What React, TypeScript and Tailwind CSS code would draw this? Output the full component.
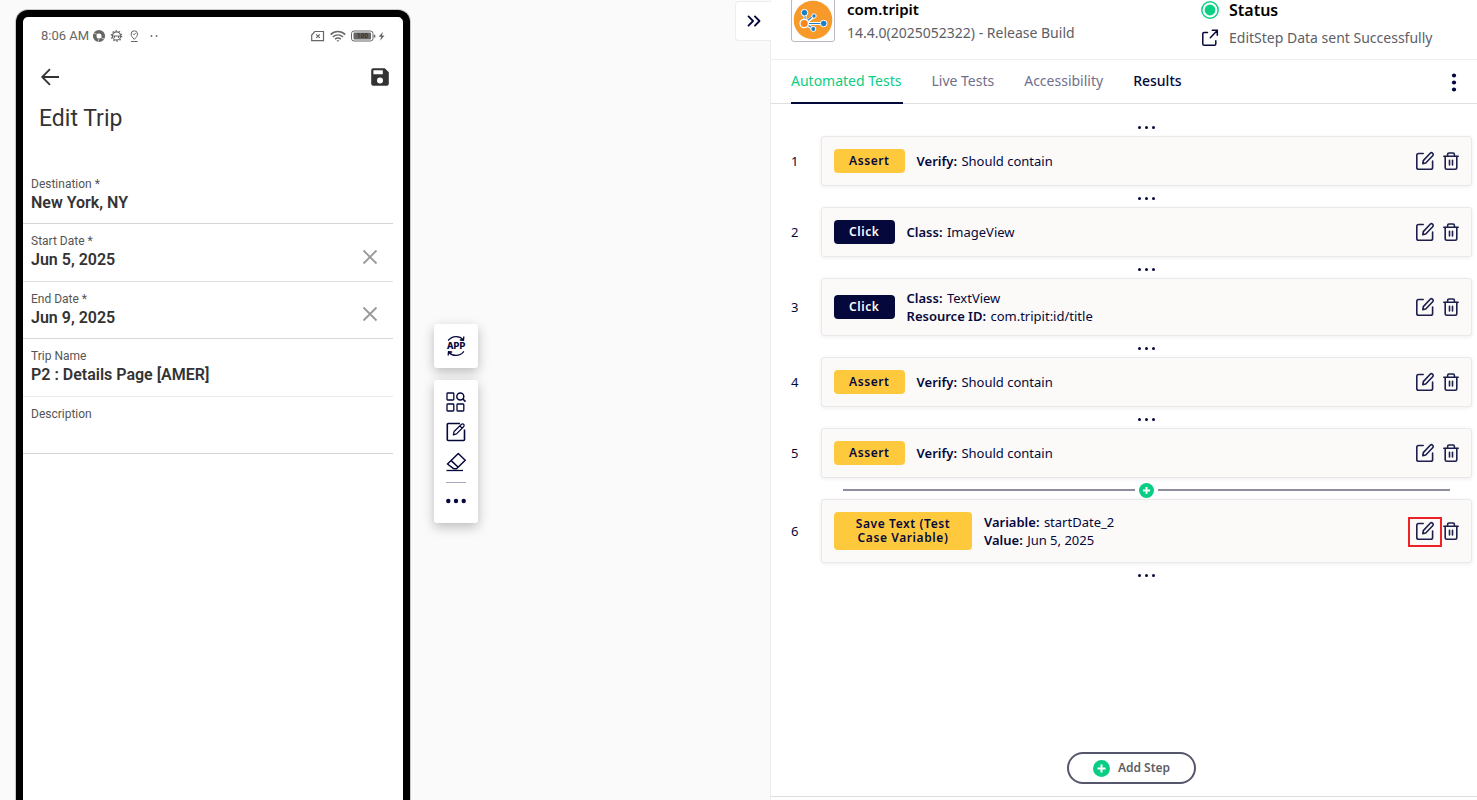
import { ChevronsRight } from "lucide-react";

interface StepDetail {
  label: string;
  value: string;
}

interface Step {
  id: number;
  action: string;
  kind: "assert" | "click" | "save";
  details: StepDetail[];
  highlighted?: boolean;
}

const steps: Step[] = [
  { id: 1, action: "Assert", kind: "assert", details: [{ label: "Verify", value: "Should contain" }] },
  { id: 2, action: "Click", kind: "click", details: [{ label: "Class", value: "ImageView" }] },
  {
    id: 3,
    action: "Click",
    kind: "click",
    details: [
      { label: "Class", value: "TextView" },
      { label: "Resource ID", value: "com.tripit:id/title" },
    ],
  },
  { id: 4, action: "Assert", kind: "assert", details: [{ label: "Verify", value: "Should contain" }] },
  { id: 5, action: "Assert", kind: "assert", details: [{ label: "Verify", value: "Should contain" }] },
  {
    id: 6,
    action: "Save Text (Test Case Variable)",
    kind: "save",
    details: [
      { label: "Variable", value: "startDate_2" },
      { label: "Value", value: "Jun 5, 2025" },
    ],
    highlighted: true,
  },
];

const badgeStyles = {
  assert: "bg-[#ffc93e] text-[#05083b]",
  click: "bg-[#05083b] text-white",
  save: "w-[138px] bg-[#ffc93e] text-[#05083b]",
};

const tripFields = [
  { id: "destination", label: "Destination *", value: "New York, NY", clearable: false, line: "border-[#d4d4d4]" },
  { id: "start-date", label: "Start Date *", value: "Jun 5, 2025", clearable: true, line: "border-[#e2e2e2]" },
  { id: "end-date", label: "End Date *", value: "Jun 9, 2025", clearable: true, line: "border-[#d6d6d6]" },
  { id: "trip-name", label: "Trip Name", value: "P2 : Details Page [AMER]", clearable: false, line: "border-[#ebebeb]" },
  { id: "description", label: "Description", value: "", clearable: false, line: "border-[#d4d4d4]" },
];

const tabs = [
  { name: "Automated Tests", style: "border-[#05083b] text-[#0bce82]" },
  { name: "Live Tests", style: "border-transparent text-[#706f8c]" },
  { name: "Accessibility", style: "border-transparent text-[#706f8c]" },
  { name: "Results", style: "border-transparent font-medium text-[#05083b]" },
];

function EditIcon() {
  return (
    <svg viewBox="0 0 20 20" className="size-5" fill="none" stroke="#1d1f4d" strokeWidth="1.6" strokeLinecap="round" strokeLinejoin="round">
      <path d="M8.2 2.5H3.6c-1 0-1.8.8-1.8 1.8v12.2c0 1 .8 1.8 1.8 1.8h12.2c1 0 1.8-.8 1.8-1.8V10" />
      <path d="M8.3 9.6l6.9-7.3a1.7 1.7 0 0 1 2.5 2.4l-7 7.3-2.9.6z" />
    </svg>
  );
}

function TrashIcon() {
  return (
    <svg viewBox="0 0 20 20" className="size-5" fill="none" stroke="#1d1f4d" strokeWidth="1.6" strokeLinecap="round" strokeLinejoin="round">
      <path d="M2.8 5.3h14.4M6.6 5V3.4c0-.8.6-1.4 1.4-1.4h4c.8 0 1.4.6 1.4 1.4V5" />
      <path d="M4.2 5.5v11c0 1 .7 1.7 1.7 1.7h8.2c1 0 1.7-.7 1.7-1.7v-11M8.5 9.3v4.6M11.5 9.3v4.6" />
    </svg>
  );
}

function PlusCircle({ className }: { className: string }) {
  return (
    <svg viewBox="0 0 16 16" className={className}>
      <circle cx="8" cy="8" r="8" fill="#08ce84" />
      <path d="M8 4.2v7.6M4.2 8h7.6" stroke="#fff" strokeWidth="1.9" />
    </svg>
  );
}

function StepGap({ open }: { open?: boolean }) {
  if (open) {
    return (
      <div className="flex h-[21px] items-center pt-[3px] pr-[22px] pl-[52px]">
        <span className="h-[2px] flex-1 bg-[#8f8d9f]" />
        <button aria-label="Insert step" className="mx-1">
          <PlusCircle className="size-[15px]" />
        </button>
        <span className="h-[2px] flex-1 bg-[#8f8d9f]" />
      </div>
    );
  }
  return (
    <div className="flex h-[21px] items-center justify-center pt-[3px] pl-[30px]">
      <button aria-label="Show insert options" className="flex gap-1">
        <span className="size-[3px] rounded-full bg-[#05083b]" />
        <span className="size-[3px] rounded-full bg-[#05083b]" />
        <span className="size-[3px] rounded-full bg-[#05083b]" />
      </button>
    </div>
  );
}

function StepRow({ step }: { step: Step }) {
  return (
    <div className="flex items-center text-[13px] leading-[18px] text-[#05083b]">
      <span className="w-[30px]">{step.id}</span>
      <div className="flex flex-1 items-center rounded-[3px] border border-[#e9e9eb] bg-[#fbfaf9] py-[10px] pr-[10px] pl-3 shadow-[0_1px_4px_rgba(0,0,0,0.07)]">
        <span
          className={`my-[2px] mr-3 rounded-[4px] px-[15px] py-[5px] text-center text-[12px] leading-[14px] font-semibold tracking-wider ${badgeStyles[step.kind]}`}
        >
          {step.action}
        </span>
        <div className="flex-1">
          {step.details.map((detail) => (
            <p key={detail.label}>
              <b className="mr-px font-semibold">{detail.label}:</b> {detail.value}
            </p>
          ))}
        </div>
        <div className="flex gap-[6px]">
          <button aria-label={`Edit step ${step.id}`} className="relative">
            <EditIcon />
            {step.highlighted && <span className="absolute -top-1 -right-[7px] -bottom-[6px] -left-[7px] border-2 border-[#ee2226]" />}
          </button>
          <button aria-label={`Delete step ${step.id}`}>
            <TrashIcon />
          </button>
        </div>
      </div>
    </div>
  );
}

function StatusBar() {
  return (
    <div className="flex h-[37px] items-center pr-[17px] pl-[18px] text-[13px] text-[#666]">
      <span>8:06 AM</span>
      <svg viewBox="0 0 66 14" className="ml-[3px] h-[14px] w-[66px]" fill="none" stroke="#666">
        <circle cx="7" cy="7" r="4.3" strokeWidth="3.6" />
        <path d="M5.5 4.6l4 2.4-4 2.6z" fill="#fff" stroke="none" />
        <path d="M1.3 4l3.6 1.2M12.4 10L9 8.8M6 13l1-3.4" stroke="#fff" strokeWidth=".6" />
        <circle cx="24.500" cy="7" r="4.100" strokeWidth="1.2" />
        <circle cx="24.500" cy="7" r="5.200" strokeWidth="1.2" strokeDasharray="1.5 1.77" />
        <path d="M20.500 7h8M22.500 7v2M26.500 7v2" strokeWidth="1" />
        <path d="M42.300 10.400c-2-2.200-3.200-3.600-3.200-5.400a3.200 3.200 0 0 1 6.400 0c0 1.800-1.200 3.200-3.200 5.400zM39 12.500h6.600" strokeWidth="1" />
        <path d="M41 4.700l1.100 1.200 1.800-2" strokeWidth=".9" />
        <circle cx="59.500" cy="7" r=".9" fill="#666" stroke="none" />
        <circle cx="64.500" cy="7" r=".9" fill="#666" stroke="none" />
      </svg>
      <svg viewBox="0 0 76 14" className="ml-auto h-[14px] w-[76px]" fill="none" stroke="#666">
        <path d="M4.800 2.500h8.700v9.200H1.700V6z" strokeWidth="1.2" />
        <path d="M6.200 5.300l3.600 3.600M9.800 5.300L6.200 8.900" strokeWidth="1.2" />
        <path d="M20.600 5.600c4.200-4 10.400-4 14.600 0M22.800 8c3-2.800 7.200-2.800 10.200 0M25 10.200c1.800-1.500 4-1.500 5.800 0" strokeWidth="1.500" />
        <path d="M26.500 11.300h2.800l-1.400 1.600z" fill="#666" stroke="none" />
        <rect x="41.500" y="2" width="21.500" height="10" rx="2.500" strokeWidth="1" />
        <rect x="43.500" y="3.500" width="17.500" height="7" rx="1" fill="#666" stroke="none" />
        <text x="52.300" y="9.300" textAnchor="middle" fontSize="6.500" fontWeight="700" fill="#333" stroke="none">100</text>
        <path d="M64.600 5.800v2.800" strokeWidth="1.400" />
        <path d="M73 2.800l-4.400 5h2.600l-1 3.900 4.300-5.200h-2.600z" fill="#666" stroke="none" />
      </svg>
    </div>
  );
}

function Phone() {
  return (
    <div className="mt-[10px] w-[394px] shrink-0 rounded-t-[12px] border-x-[7px] border-t-[7px] border-black bg-white font-[Roboto,sans-serif] text-[#333] ring-1 ring-[#c9c9c9]">
      <StatusBar />
      <div className="mt-[13px] flex items-center justify-between pr-[13px] pl-[17px]">
        <button aria-label="Back">
          <svg viewBox="0 0 20 20" className="size-5" fill="none" stroke="#333" strokeWidth="1.8">
            <path d="M19 10H2.500M10 2.200L2.200 10l7.800 7.800" />
          </svg>
        </button>
        <button aria-label="Save trip">
          <svg viewBox="0 0 20 20" className="size-5">
            <path
              d="M3.200 1.200h11.600l4 4v11.600a2 2 0 0 1-2 2H3.200a2 2 0 0 1-2-2V3.200a2 2 0 0 1 2-2zM3.400 3.200v4h9.400v-4zM10 10.400a3 3 0 1 0 0 6 3 3 0 0 0 0-6z"
              fill="#333"
              fillRule="evenodd"
            />
          </svg>
        </button>
      </div>
      <h1 className="mt-4 ml-4 text-[23px] leading-8">Edit Trip</h1>
      <form className="mt-8 mr-[10px]">
        {tripFields.map((field) => (
          <div key={field.id} className={`flex h-[57px] border-b even:h-[58px] ${field.line}`}>
            <div className="flex flex-1 flex-col pt-[9px] pl-2">
              <label htmlFor={field.id} className="text-[12px] leading-4 text-[#555]">
                {field.label}
              </label>
              <input id={field.id} defaultValue={field.value} className="text-[16px] leading-[22px] font-semibold outline-none" />
            </div>
            {field.clearable && (
              <button type="button" aria-label={`Clear ${field.label}`} className="mr-[15px]">
                <svg viewBox="0 0 16 16" className="mt-2 size-4" stroke="#999" strokeWidth="1.800">
                  <path d="M1.500 1.500l13 13M14.500 1.500l-13 13" />
                </svg>
              </button>
            )}
          </div>
        ))}
      </form>
    </div>
  );
}

function DeviceTools() {
  return (
    <div className="mt-[324px] ml-6 flex w-11 flex-col gap-3">
      <button aria-label="Switch app" className="flex h-11 items-center justify-center rounded-[3px] bg-white shadow-[0_4px_12px_rgba(0,0,0,0.25)]">
        <svg viewBox="0 0 22 22" className="size-[22px]" fill="none" stroke="#05083b" strokeWidth="1.300" strokeLinecap="round">
          <path d="M3.500 5.200c3.800-4.600 11-4.700 14.800-.4M18.800 2l-.3 3.200-3.200-.2" />
          <path d="M18.500 16.800c-3.800 4.600-11 4.700-14.800.4M3.200 20l.3-3.200 3.200.2" />
          <text x="11" y="14.200" textAnchor="middle" fontFamily="Inter, sans-serif" fontSize="9" fontWeight="800" fill="#05083b" stroke="none">APP</text>
        </svg>
      </button>
      <div className="flex flex-col items-center gap-[10px] rounded-[3px] bg-white pt-3 pb-[14px] shadow-[0_4px_12px_rgba(0,0,0,0.25)]">
        <button aria-label="Inspect elements">
          <svg viewBox="0 0 20 20" className="size-5" fill="none" stroke="#05083b" strokeWidth="1.300">
            <rect x="1" y="1" width="6.800" height="7" rx=".8" />
            <rect x="1" y="12" width="6.800" height="7" rx=".8" />
            <rect x="11" y="12" width="6.800" height="7" rx=".8" />
            <circle cx="14.300" cy="4.500" r="3.500" strokeWidth="1.500" />
            <path d="M16.900 7l2.600 2.700" strokeWidth="1.600" />
          </svg>
        </button>
        <button aria-label="Annotate">
          <svg viewBox="0 0 20 20" className="size-5" fill="none" stroke="#05083b" strokeWidth="1.600" strokeLinejoin="round">
            <path d="M14 1.500H2.300c-.6 0-1 .4-1 1v15c0 .6.400 1 1 1h15.200c.6 0 1-.4 1-1V7.500" />
            <path d="M7.300 12.800l.8-3.300 7.400-7.300c1.600-1.200 3.400.6 2.300 2.300l-7.300 7.400zM14 4l2.300 2.300" strokeWidth="1.200" />
          </svg>
        </button>
        <button aria-label="Erase">
          <svg viewBox="0 0 20 20" className="size-5" fill="none" stroke="#05083b" strokeWidth="1.500" strokeLinejoin="round">
            <path d="M12.300 1.500l6.900 6.700-8.700 8.500H7.600L1.500 12z" />
            <path d="M5.200 8.600l7 6.600" />
            <path d="M.5 18.500H17" strokeWidth="1.300" />
          </svg>
        </button>
        <hr className="w-5 border-[#a9a8bd]" />
        <button aria-label="More tools">
          <svg viewBox="0 0 20 16" className="h-4 w-5" fill="#05083b">
            <circle cx="2.300" cy="8" r="2.200" />
            <circle cx="10" cy="8" r="2.200" />
            <circle cx="17.700" cy="8" r="2.200" />
          </svg>
        </button>
      </div>
    </div>
  );
}

function TripitLogo() {
  return (
    <svg viewBox="0 0 40 40" className="size-10 shrink-0">
      <circle cx="20" cy="20" r="19.300" fill="#f79a2a" />
      <g stroke="#fff" strokeWidth="3" strokeLinecap="round">
        <path d="M12 23.500V12.500M12 23.500l9-7.500M12 23.500h19M12 23.500l8.500 5.500" />
      </g>
      <g stroke="#1c7fc4" strokeWidth="1.100">
        <path d="M12 22V13M12 22.500l9-7M12 23.500h19M12 23.500l8.500 5" />
      </g>
      <g fill="#1c7fc4" stroke="#fff" strokeWidth="1">
        <circle cx="11.500" cy="12.700" r="3.300" />
        <circle cx="21" cy="16" r="2.200" />
        <circle cx="30.700" cy="23.500" r="3.300" />
        <circle cx="20.300" cy="29" r="2.500" />
      </g>
      <circle cx="11.200" cy="23.500" r="4.200" fill="#f7861f" stroke="#fff" strokeWidth="1.300" />
    </svg>
  );
}

function PanelHeader() {
  return (
    <header className="grid h-[60px] shrink-0 grid-cols-[410fr_276fr] grid-rows-[59px] items-end overflow-hidden border-b border-[#ededf0] pl-5">
      <div className="mb-[17px] flex items-end gap-3">
        <div className="flex size-11 shrink-0 items-center justify-center rounded-[3px] border border-[#b9b9c3] bg-white">
          <TripitLogo />
        </div>
        <div>
          <h2 className="text-[15px] leading-[30px] font-semibold text-black">com.tripit</h2>
          <p className="text-[14px] leading-[18px] text-[#5d5e66]">14.4.0(2025052322) - Release Build</p>
        </div>
      </div>
      <div className="mb-[11px]">
        <div className="flex items-center gap-[10px]">
          <svg viewBox="0 0 18 18" className="size-[18px]">
            <circle cx="9" cy="9" r="8.200" fill="#fff" stroke="#0bd184" strokeWidth="1.500" />
            <circle cx="9" cy="9" r="5.400" fill="#0bd184" />
          </svg>
          <h2 className="text-[16px] leading-9 font-semibold text-black">Status</h2>
        </div>
        <div className="flex items-center gap-[10px]">
          <svg viewBox="0 0 18 18" className="size-[18px]" fill="none" stroke="#05083b" strokeWidth="1.500" strokeLinecap="round">
            <path d="M6.500 3.500H3.200c-.8 0-1.400.6-1.400 1.400v10c0 .8.6 1.400 1.400 1.400h10.200c.8 0 1.400-.6 1.400-1.400v-3.200" />
            <path d="M9.300 8.700l6.700-7M11.300 1.300h5v5" />
          </svg>
          <p className="text-[14px] leading-5 text-[#5d5e66]">EditStep Data sent Successfully</p>
        </div>
      </div>
    </header>
  );
}

export default function App() {
  return (
    <div className="grid h-screen grid-cols-[770fr_707fr] overflow-hidden bg-[#fafafa] font-['Noto_Sans',sans-serif]">
      <section className="flex min-w-0 pl-4">
        <Phone />
        <DeviceTools />
      </section>

      <section className="relative flex min-w-0 flex-col border-l border-[#ededf0] bg-white">
        {/* Collapse handle */}
        <button
          aria-label="Collapse panel"
          className="absolute top-px right-full flex h-10 w-9 items-center justify-center rounded-l-[4px] border border-r-0 border-[#ededf0] bg-white"
        >
          <ChevronsRight className="size-[22px] text-[#05083b]" strokeWidth={2} />
        </button>

        <PanelHeader />

        <nav className="flex h-11 shrink-0 items-center border-b border-[#dedee3] pr-[13px] pl-5">
          <div className="-mb-px flex gap-7 self-stretch text-[14px]">
            {tabs.map((tab) => (
              <button key={tab.name} className={`border-b-2 pr-[2px] pb-[2px] ${tab.style}`}>
                {tab.name}
              </button>
            ))}
          </div>
          <button aria-label="More options" className="ml-auto">
            <svg viewBox="0 0 20 20" className="size-5" fill="#05083b">
              <circle cx="10" cy="3.500" r="2.100" />
              <circle cx="10" cy="10.500" r="2.100" />
              <circle cx="10" cy="17.500" r="2.100" />
            </svg>
          </button>
        </nav>

        <div className="flex flex-1 flex-col pt-[11px] pr-[5px] pb-3 pl-5">
          <StepGap />
          <ol>
            {steps.map((step, index) => (
              <li key={step.id}>
                <StepRow step={step} />
                <StepGap open={index === 4} />
              </li>
            ))}
          </ol>
          <button className="mx-auto mt-auto flex h-8 items-center gap-2 rounded-full border-2 border-[#55566b] px-6 text-[12px] font-semibold text-[#5d5e66]">
            <PlusCircle className="size-[17px]" />
            Add Step
          </button>
        </div>
        <footer className="h-1 shrink-0 border-t border-[#dedede]" />
      </section>
    </div>
  );
}
